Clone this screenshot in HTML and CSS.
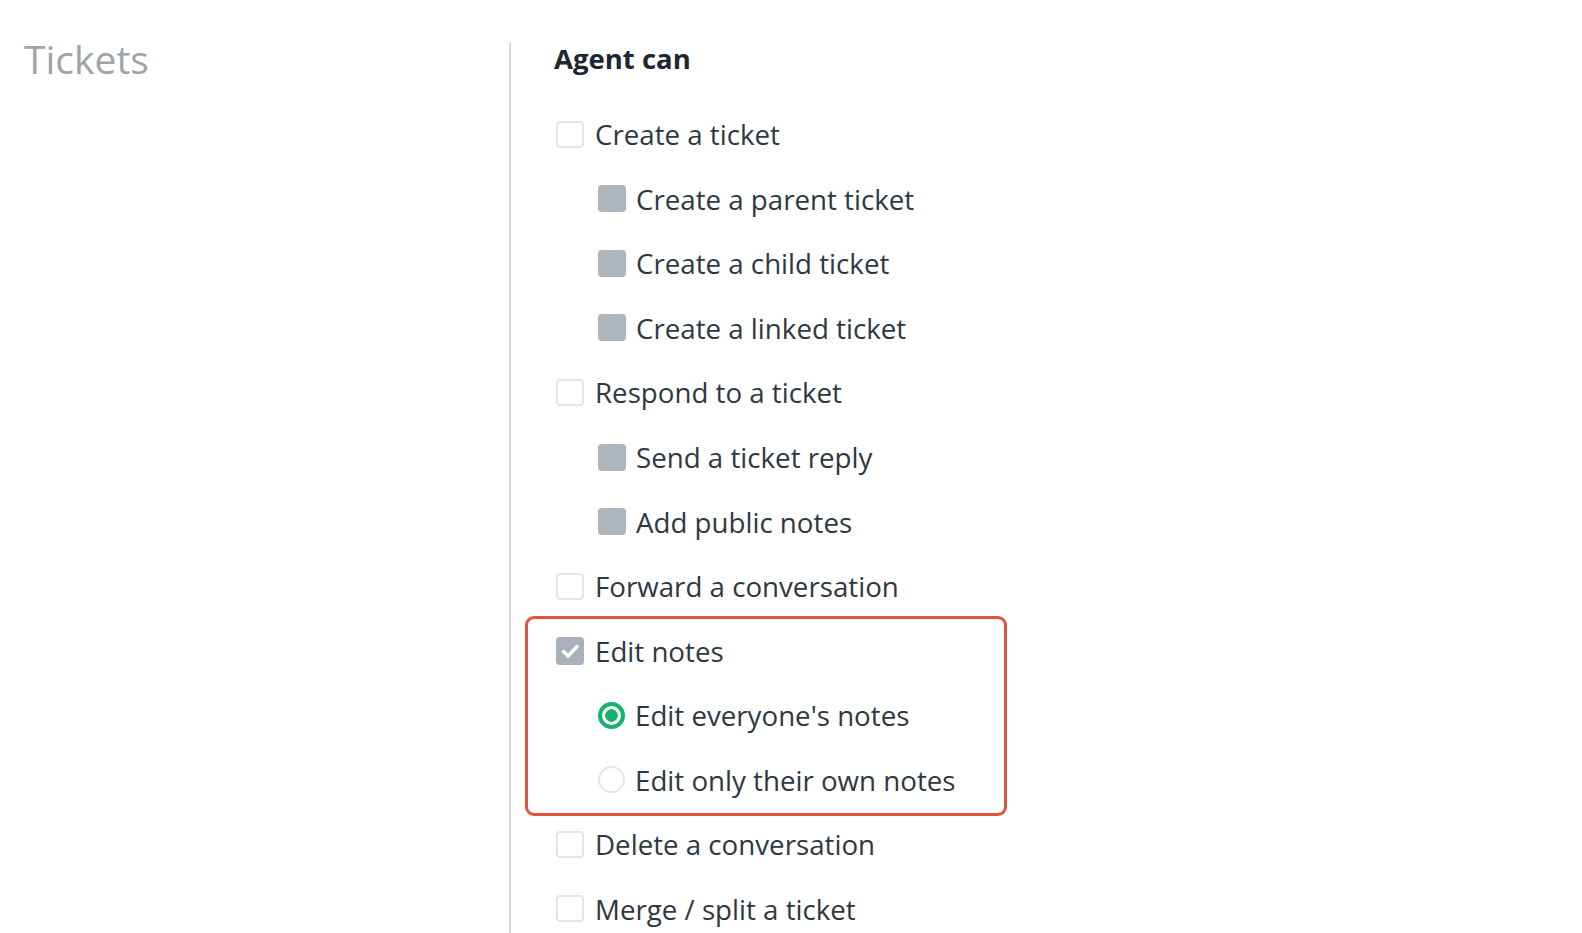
FILE: index.html
```html
<!DOCTYPE html>
<html lang="en">
<head>
<meta charset="utf-8">
<title>Tickets permissions</title>
<link rel="stylesheet" href="styles.css">
</head>
<body>
<div class="page">
  <aside class="side">
    <h2 class="side-title">Tickets</h2>
  </aside>
  <main class="main">
    <h3 class="heading">Agent can</h3>
    <ul class="perm-list">
      <li class="row"><span class="box"></span><span class="label">Create a ticket</span></li>
      <li class="row sub"><span class="box disabled"></span><span class="label">Create a parent ticket</span></li>
      <li class="row sub"><span class="box disabled"></span><span class="label">Create a child ticket</span></li>
      <li class="row sub"><span class="box disabled"></span><span class="label">Create a linked ticket</span></li>
      <li class="row"><span class="box"></span><span class="label">Respond to a ticket</span></li>
      <li class="row sub"><span class="box disabled"></span><span class="label">Send a ticket reply</span></li>
      <li class="row sub"><span class="box disabled"></span><span class="label">Add public notes</span></li>
      <li class="row"><span class="box"></span><span class="label">Forward a conversation</span></li>
      <li class="group">
        <ul class="perm-list">
          <li class="row"><span class="box checked"><svg viewBox="0 0 28 28" width="28" height="28"><path d="M7.5 14.5l4.5 4.5 9-9.5" fill="none" stroke="#fff" stroke-width="3.4" stroke-linecap="round" stroke-linejoin="round"/></svg></span><span class="label">Edit notes</span></li>
          <li class="row sub"><span class="radio on"></span><span class="label">Edit everyone's notes</span></li>
          <li class="row sub"><span class="radio"></span><span class="label">Edit only their own notes</span></li>
        </ul>
      </li>
      <li class="row"><span class="box"></span><span class="label">Delete a conversation</span></li>
      <li class="row"><span class="box"></span><span class="label">Merge / split a ticket</span></li>
    </ul>
  </main>
</div>
</body>
</html>
```
FILE: styles.css
```css
* { box-sizing: border-box; }
html, body { margin: 0; padding: 0; background: #fff; }
body {
  font-family: "Open Sans", "Noto Sans", "Liberation Sans", sans-serif;
  color: #2e3843;
  height: 933px;
  overflow: hidden;
}
.page {
  display: flex;
  height: 933px;
}
.side {
  width: 509px;
  padding: 41px 0 0 24px;
}
.side-title {
  margin: 0;
  font-size: 39px;
  font-weight: 400;
  line-height: 36px;
  color: #9ea4aa;
}
.main {
  margin-top: 42px;
  border-left: 2px solid #d9d9d9;
  padding-left: 45px;
  flex: 1;
}
.heading {
  margin: -1px 0 25px -2px;
  font-size: 27.5px;
  font-weight: 700;
  line-height: 36px;
  color: #1d2731;
}
.perm-list {
  list-style: none;
  margin: 0;
  padding: 0;
}
.row {
  height: 64.55px;
  display: flex;
  align-items: center;
  gap: 11px;
}
.row.sub { padding-left: 42px; gap: 10px; }
.label {
  font-size: 27.7px;
  line-height: 36px;
  white-space: nowrap;
}
.box {
  width: 28px;
  height: 27px;
  flex: none;
  border: 2px solid #e3e6e9;
  border-radius: 4px;
  background: #fff;
  display: flex;
  align-items: center;
  justify-content: center;
}
.box.disabled {
  border: none;
  background: #adb5bd;
}
.box.checked {
  border: none;
  background: #a9b2bc;
  height: 28px;
}
.box svg { display: block; }
.radio {
  width: 27px;
  height: 27px;
  flex: none;
  border-radius: 50%;
  border: 2px solid #e3e6e9;
  background: #fff;
}
.radio.on {
  border: 4px solid #17b26b;
  background: radial-gradient(circle, #17b26b 0 6px, #fff 6.5px);
}
.group {
  position: relative;
}
.group::after {
  content: "";
  position: absolute;
  top: -2px;
  left: -31px;
  width: 476px;
  bottom: -4px;
  border: 3px solid #e4523f;
  border-radius: 9px;
  pointer-events: none;
}
```
